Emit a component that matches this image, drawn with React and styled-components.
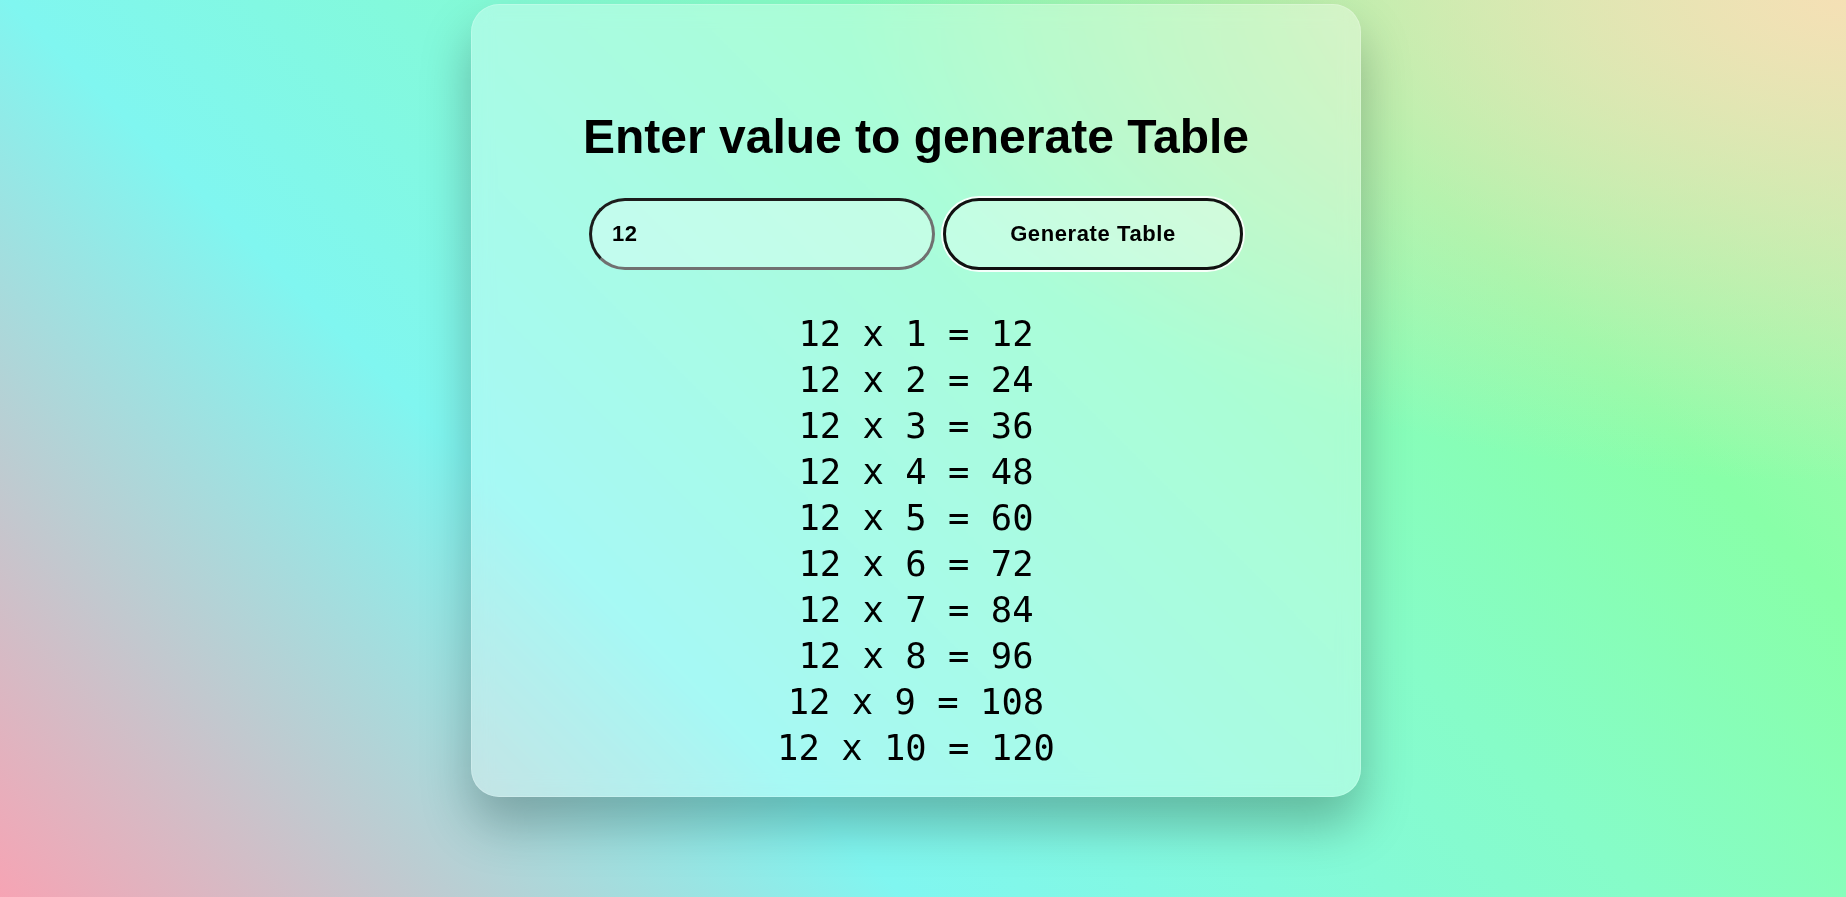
import React, { useState } from 'react';
import styled, { createGlobalStyle } from 'styled-components';

const GlobalStyle = createGlobalStyle`
  html, body {
    margin: 0;
    padding: 0;
  }
  body {
    font-family: "Liberation Sans", Arial, sans-serif;
  }
  * {
    box-sizing: border-box;
  }
`;

const Page = styled.div`
  min-height: 100vh;
  width: 100%;
  display: flex;
  justify-content: center;
  align-items: flex-start;
  padding: 4px 14px 0 0;
  background:
    radial-gradient(ellipse at top right, rgba(245, 224, 181, 1) 0%, rgba(245, 224, 181, 0) 38%),
    linear-gradient(45deg, #f6a4b4 0%, #80f6f0 33%, #86fcc8 60%, #88ffa8 78%, #b8f4b0 100%);
`;

const Card = styled.div`
  width: 890px;
  display: flex;
  flex-direction: column;
  align-items: center;
  padding: 104px 0 25px;
  border-radius: 28px;
  background: rgba(255, 255, 255, 0.3);
  border: 1px solid rgba(255, 255, 255, 0.2);
  backdrop-filter: blur(10px);
  box-shadow: 0 28px 50px rgba(0, 0, 0, 0.26);
`;

const Title = styled.h1`
  margin: 0;
  font-size: 48px;
  line-height: 56px;
  font-weight: 700;
  color: #000;
`;

const FormRow = styled.div`
  display: flex;
  align-items: center;
  gap: 8px;
  margin-top: 33px;
`;

const NumberInput = styled.input`
  width: 346px;
  height: 72px;
  padding: 0 20px;
  border-radius: 36px;
  border-width: 3px;
  border-style: solid;
  border-color: #1c1c1c #707070 #707070 #1c1c1c;
  background: rgba(255, 255, 255, 0.3);
  font-family: "Liberation Sans", Arial, sans-serif;
  font-size: 22px;
  font-weight: 700;
  letter-spacing: 0.6px;
  color: #000;
  outline: none;
`;

const GenerateButton = styled.button`
  width: 300px;
  height: 72px;
  border-radius: 36px;
  border: 3px solid #111;
  box-shadow: 0 0 0 2px rgba(255, 255, 255, 0.9);
  background: rgba(255, 255, 255, 0.3);
  font-family: "Liberation Sans", Arial, sans-serif;
  font-size: 22px;
  font-weight: 700;
  letter-spacing: 0.6px;
  color: #000;
  cursor: pointer;
`;

const TableList = styled.div`
  margin-top: 41px;
  display: flex;
  flex-direction: column;
  align-items: center;
`;

const TableRow = styled.div`
  font-family: "DejaVu Sans Mono", "Liberation Mono", monospace;
  font-size: 35.5px;
  line-height: 46px;
  color: #000;
  white-space: pre;
`;

export default function App() {
  const [value, setValue] = useState('12');
  const [num, setNum] = useState(12);

  const rows = [];
  for (let i = 1; i <= 10; i++) {
    rows.push(`${num} x ${i} = ${num * i}`);
  }

  return (
    <>
      <GlobalStyle />
      <Page>
        <Card>
          <Title>Enter value to generate Table</Title>
          <FormRow>
            <NumberInput
              type="text"
              value={value}
              onChange={(e) => setValue(e.target.value)}
            />
            <GenerateButton onClick={() => setNum(Number(value) || 0)}>
              Generate Table
            </GenerateButton>
          </FormRow>
          <TableList>
            {rows.map((r) => (
              <TableRow key={r}>{r}</TableRow>
            ))}
          </TableList>
        </Card>
      </Page>
    </>
  );
}
